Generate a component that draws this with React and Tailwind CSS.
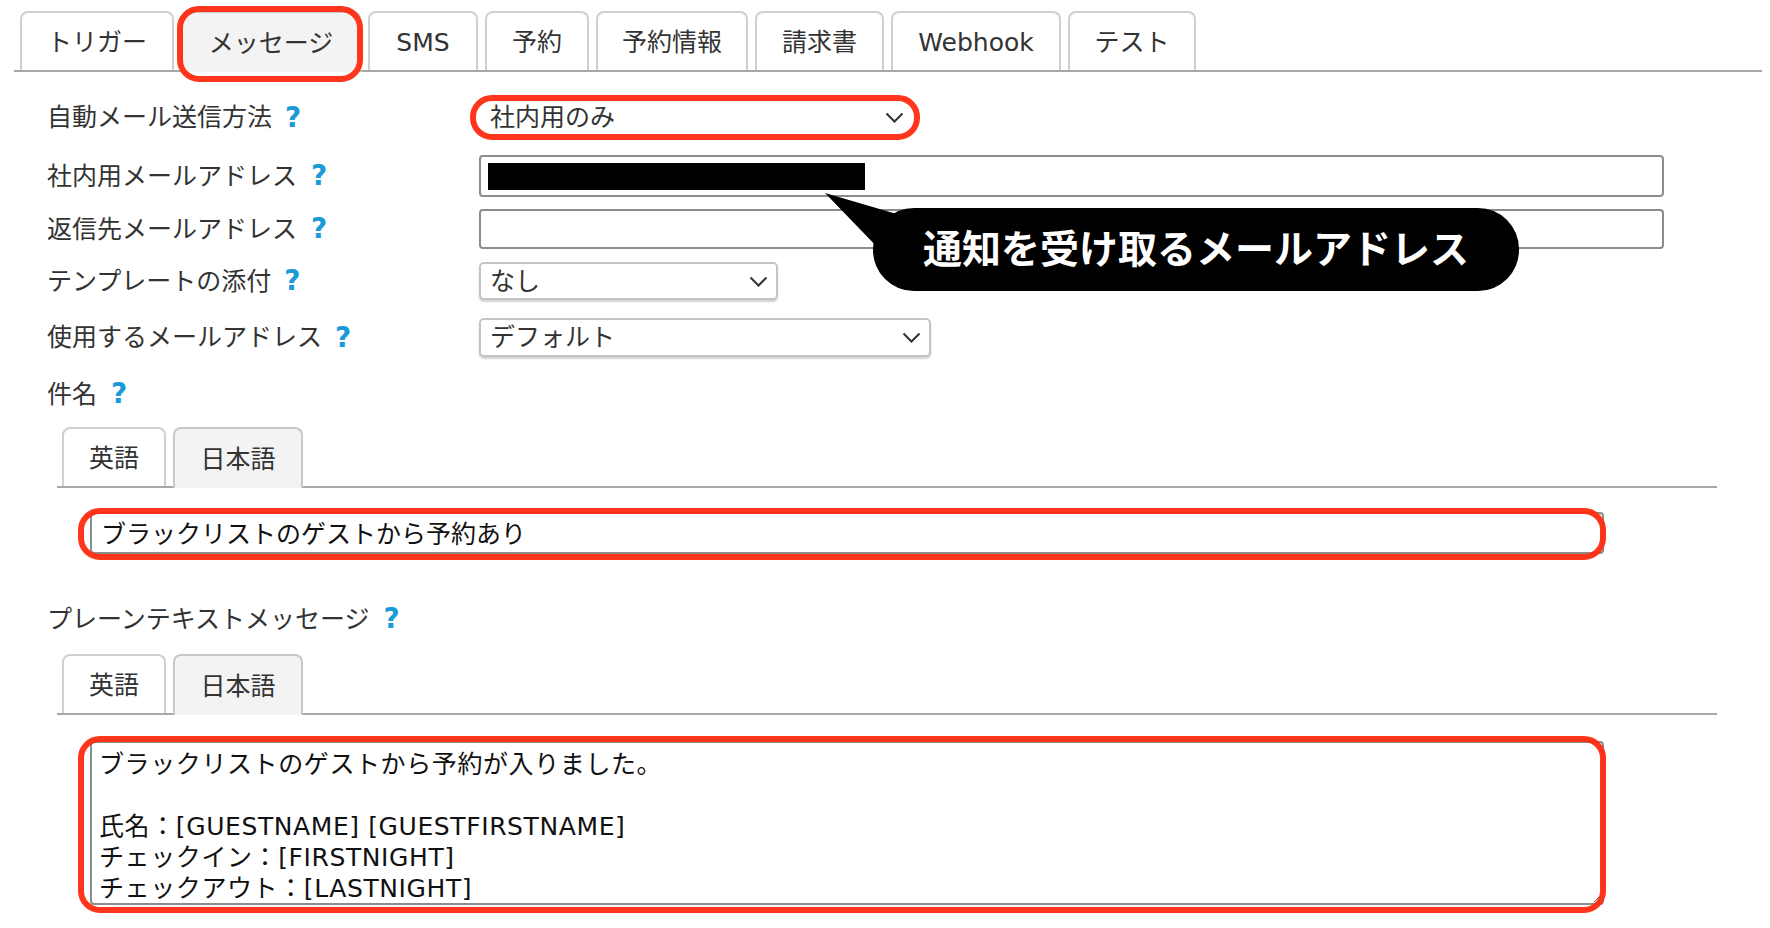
import React from 'react';

// タブ定義（幅は実寸）
const mainTabs = [
  { label: 'トリガー', w: 'w-[154px]' },
  { label: 'メッセージ', w: 'w-[180px]', active: true },
  { label: 'SMS', w: 'w-[110px]' },
  { label: '予約', w: 'w-[104px]' },
  { label: '予約情報', w: 'w-[152px]' },
  { label: '請求書', w: 'w-[129px]' },
  { label: 'Webhook', w: 'w-[170px]' },
  { label: 'テスト', w: 'w-[128px]' },
];

const langTabs = [
  { label: '英語', w: 'w-[104px]' },
  { label: '日本語', w: 'w-[130px]', active: true },
];

function Tab({ label, w, active }) {
  return (
    <div
      className={
        active
          ? `${w} h-[61px] -mb-[2px] pt-[2px] flex items-center justify-center border-2 border-b-0 border-[#c8c8c8] rounded-t-[8px] bg-[#f3f3f3] text-[#333]`
          : `${w} h-[59px] pt-[2px] flex items-center justify-center border-2 border-b-0 border-[#d0d0d0] rounded-t-[8px] bg-white text-[#333]`
      }
    >
      {label}
    </div>
  );
}

function Help({ ml = 'ml-[14px]' }) {
  return <span className={`${ml} font-bold text-[28px] leading-none text-[#1a9bd7]`}>?</span>;
}

function Chevron() {
  return (
    <svg width="19" height="11" viewBox="0 0 19 11" className="shrink-0">
      <polyline points="1.5,1.5 9.5,9.5 17.5,1.5" fill="none" stroke="#333" strokeWidth="2" />
    </svg>
  );
}

function Select({ value, w, plain }) {
  return (
    <div
      className={
        plain
          ? `${w} h-full flex items-center justify-between pl-[9px] pr-[7px] rounded-[5px] border-2 border-transparent text-[#333]`
          : `${w} h-full flex items-center justify-between pl-[9px] pr-[8px] rounded-[5px] border-2 border-[#c4c4c4] bg-white shadow-[0_2px_2px_rgba(0,0,0,0.18)] text-[#333]`
      }
    >
      <span>{value}</span>
      <Chevron />
    </div>
  );
}

function Row({ label, help, mt, h, children }) {
  return (
    <div className={`${mt} ${h} flex items-center`}>
      <div className="w-[432px] flex items-center text-[#333]">
        <span>{label}</span>
        {help}
      </div>
      {children}
    </div>
  );
}

function Outline({ className }) {
  return (
    <div
      className={`absolute border-[6px] border-[#ff2b0f] rounded-[22px] pointer-events-none opacity-95 ${className}`}
    />
  );
}

export default function App() {
  const body =
    'ブラックリストのゲストから予約が入りました。\n\n氏名：[GUESTNAME] [GUESTFIRSTNAME]\nチェックイン：[FIRSTNIGHT]\nチェックアウト：[LASTNIGHT]';

  return (
    <div className="relative w-[1770px] h-[928px] overflow-hidden bg-white text-[25px] leading-none font-['DejaVu_Sans','Noto_Sans_CJK_JP',sans-serif]">
      {/* メインタブ */}
      <div className="ml-[14px] w-[1748px] pt-[11px] pl-[6px] flex items-end gap-[7px] border-b-2 border-[#a8a8a8]">
        {mainTabs.map((t) => (
          <Tab key={t.label} {...t} />
        ))}
      </div>

      {/* 設定フォーム */}
      <div className="pl-[47px]">
        <Row label="自動メール送信方法" help={<Help ml="ml-[13px]" />} mt="mt-[26px]" h="h-[39px]">
          <Select value="社内用のみ" w="w-[434px]" plain />
        </Row>
        <Row label="社内用メールアドレス" help={<Help ml="ml-[14px]" />} mt="mt-[18px]" h="h-[42px]">
          <div className="w-[1185px] h-full flex items-center pl-[7px] border-2 border-[#8c8c8c] rounded-[4px]">
            <span className="block w-[377px] h-[27px] bg-black" />
          </div>
        </Row>
        <Row label="返信先メールアドレス" help={<Help ml="ml-[14px]" />} mt="mt-[12px]" h="h-[40px]">
          <div className="w-[1185px] h-full border-2 border-[#8c8c8c] rounded-[4px]" />
        </Row>
        <Row label="テンプレートの添付" help={<Help ml="ml-[13px]" />} mt="mt-[13px]" h="h-[38px]">
          <Select value="なし" w="w-[299px]" />
        </Row>
        <Row label="使用するメールアドレス" help={<Help ml="ml-[13px]" />} mt="mt-[18px]" h="h-[39px]">
          <Select value="デフォルト" w="w-[452px]" />
        </Row>

        <div className="mt-[22px] h-[30px] flex items-center text-[#333]">
          <span>件名</span>
          <Help ml="ml-[14px]" />
        </div>
      </div>

      {/* 件名：言語タブ */}
      <div className="ml-[57px] w-[1660px] mt-[18px] pl-[5px] flex items-end gap-[7px] border-b-2 border-[#a8a8a8]">
        {langTabs.map((t) => (
          <Tab key={t.label} {...t} />
        ))}
      </div>
      <div className="ml-[90px] mt-[24px] w-[1514px] h-[42px] flex items-center pl-[9px] pt-[2px] border-2 border-[#8c8c8c] rounded-[4px] text-[#111]">
        ブラックリストのゲストから予約あり
      </div>

      {/* プレーンテキストメッセージ */}
      <div className="pl-[47px] mt-[50px] h-[30px] flex items-center text-[#333]">
        <span>プレーンテキストメッセージ</span>
        <Help ml="ml-[14px]" />
      </div>
      <div className="ml-[57px] w-[1660px] mt-[20px] pl-[5px] flex items-end gap-[7px] border-b-2 border-[#a8a8a8]">
        {langTabs.map((t) => (
          <Tab key={t.label} {...t} />
        ))}
      </div>
      <textarea
        readOnly
        value={body}
        className="block ml-[90px] mt-[26px] w-[1514px] h-[164px] px-[7px] pt-[6px] border-2 border-[#8c8c8c] rounded-[4px] text-[25px] leading-[31px] tracking-[0.6px] text-[#111] overflow-hidden resize-y outline-none font-['DejaVu_Sans','Noto_Sans_CJK_JP',sans-serif]"
      />

      {/* 注釈：赤い囲み */}
      <Outline className="left-[177px] top-[6px] w-[186px] h-[76px]" />
      <Outline className="left-[470px] top-[95px] w-[450px] h-[45px]" />
      <Outline className="left-[78px] top-[508px] w-[1528px] h-[52px]" />
      <Outline className="left-[78px] top-[736px] w-[1528px] h-[177px]" />

      {/* 注釈：吹き出し */}
      <svg className="absolute left-[820px] top-[188px]" width="90" height="70" viewBox="0 0 90 70">
        <polygon points="5,5 80,27 62,64" fill="#000" />
      </svg>
      <div className="absolute left-[873px] top-[208px] h-[83px] rounded-[41px] bg-black px-[50px] pb-[7px] flex items-center text-white font-bold text-[39px] font-['Noto_Sans_CJK_JP',sans-serif]">
        通知を受け取るメールアドレス
      </div>
    </div>
  );
}
